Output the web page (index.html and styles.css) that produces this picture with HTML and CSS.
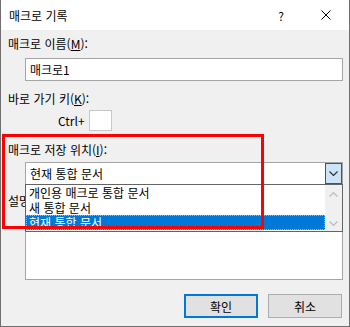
FILE: index.html
```html
<!DOCTYPE html>
<html lang="ko">
<head>
<meta charset="UTF-8" />
<title>매크로 기록</title>
<link rel="stylesheet" href="styles.css">
</head>
<body>

<div class="window">
  <!-- Заголовок окна -->
  <div class="titlebar">
    <span class="title">매크로 기록</span>
    <span class="help">?</span>
    <svg class="close" width="10" height="10" viewBox="0 0 10 10">
      <path d="M0.5 0.5 L9.5 9.5 M9.5 0.5 L0.5 9.5" stroke="#000" stroke-width="1" fill="none" />
    </svg>
  </div>

  <div class="content">
    <div class="label">매크로 이름(<u>M</u>):</div>
    <div class="field name-field">매크로1</div>

    <div class="label label-shortcut">바로 가기 키(<u>K</u>):</div>
    <div class="shortcut">
      <span>Ctrl+</span>
      <span class="key-box"></span>
    </div>

    <div class="label label-store">매크로 저장 위치(<u>I</u>):</div>
    <div class="combo">
      <span class="combo-text">현재 통합 문서</span>
      <span class="combo-btn">
        <svg width="9" height="5" viewBox="0 0 9 5"><path d="M0.5 0.5 L4.5 4.5 L8.5 0.5" stroke="#333" stroke-width="1.2" fill="none" /></svg>
      </span>

      <!-- Раскрытый список -->
      <div class="dropdown">
        <ul class="options">
          <li>개인용 매크로 통합 문서</li>
          <li>새 통합 문서</li>
          <li class="selected">현재 통합 문서</li>
        </ul>
        <div class="scrollbar">
          <svg width="9" height="5" viewBox="0 0 9 5"><path d="M0.5 4.5 L4.5 0.7 L8.5 4.5" stroke="#c2c2c2" stroke-width="1.5" fill="none" /></svg>
          <svg width="9" height="5" viewBox="0 0 9 5"><path d="M0.5 0.5 L4.5 4.3 L8.5 0.5" stroke="#c2c2c2" stroke-width="1.5" fill="none" /></svg>
        </div>
      </div>
    </div>

    <div class="label label-desc">설명(<u>D</u>):</div>
    <div class="field desc-field"></div>

    <div class="buttons">
      <button class="btn btn-default">확인</button>
      <button class="btn">취소</button>
    </div>
  </div>

  <!-- Красная рамка выделения -->
  <div class="highlight"></div>
</div>

</body>
</html>
```

FILE: styles.css
```css
/* Общие стили */
body {
  margin: 0;
  font-family: "Noto Sans CJK KR", "Noto Sans", sans-serif;
  font-size: 12px;
  line-height: 15px;
  color: #000;
  background: #fff;
}

u {
  text-decoration: underline;
  text-underline-offset: 1px;
}

/* Окно */
.window {
  position: relative;
  width: 350px;
  height: 327px;
  box-sizing: border-box;
  border: 1px solid #6f6f6f;
  border-top: none;
  background: #f0f0f0;
  overflow: hidden;
}

/* Заголовок */
.titlebar {
  height: 30px;
  display: flex;
  align-items: center;
  padding-left: 8px;
  background: #fff;
}
.titlebar .title {
  flex: 1;
}
.titlebar .help {
  margin-right: 37px;
}
.titlebar .close {
  margin-right: 18px;
}

/* Основной контент */
.content {
  padding: 6px 6px 0 7px;
}

.label-shortcut {
  margin-top: 10px;
}
.label-store {
  margin-top: 11px;
}
.label-desc {
  margin-top: 8px;
}

/* Поля */
.field {
  margin-left: 17px;
  width: 318px;
  box-sizing: border-box;
  background: #fff;
  border: 1px solid #a5a5a5;
}
.name-field {
  margin-top: 7px;
  height: 23px;
  padding: 3px 4px;
}
.desc-field {
  margin-top: 6px;
  height: 66px;
}

.shortcut {
  margin-top: 4px;
  padding-left: 50px;
  display: flex;
  align-items: center;
  gap: 4px;
}
.key-box {
  width: 23px;
  height: 21px;
  box-sizing: border-box;
  background: #fff;
  border: 1px solid #c8c8c8;
}

/* Комбобокс */
.combo {
  position: relative;
  margin-top: 5px;
  margin-left: 17px;
  width: 318px;
  height: 23px;
  box-sizing: border-box;
  border: 1px solid #a5a5a5;
  background: #fff;
  display: flex;
  align-items: center;
}
.combo-text {
  flex: 1;
  padding-left: 4px;
}
.combo-btn {
  width: 17px;
  height: 21px;
  box-sizing: border-box;
  border: 1px solid #1f5f99;
  background: #cce4f7;
  display: flex;
  align-items: center;
  justify-content: center;
}

/* Выпадающий список */
.dropdown {
  position: absolute;
  left: -1px;
  top: 21px;
  width: 318px;
  height: 48px;
  box-sizing: border-box;
  border: 1px solid #646464;
  background: #fff;
  display: flex;
  z-index: 2;
}
.options {
  flex: 1;
  list-style: none;
  margin: 0;
  padding: 0;
}
.options li {
  height: 15px;
  padding-left: 3px;
  line-height: 15px;
}
.options li.selected {
  background: #0078d7;
  color: #fff;
  outline: 1px dotted #f3a34b;
  outline-offset: -1px;
}
.scrollbar {
  width: 17px;
  background: #f0f0f0;
  display: flex;
  flex-direction: column;
  align-items: center;
  justify-content: space-between;
  padding: 7px 0 5px;
  box-sizing: border-box;
}

/* Кнопки */
.buttons {
  margin-top: 14px;
  margin-right: 1px;
  display: flex;
  justify-content: flex-end;
  gap: 10px;
}
.btn {
  width: 74px;
  height: 24px;
  font-family: inherit;
  font-size: 12px;
  color: #000;
  background: #e1e1e1;
  border: 1px solid #adadad;
  padding: 0;
}
.btn-default {
  border: 2px solid #0078d7;
}

/* Красная рамка */
.highlight {
  position: absolute;
  left: 1px;
  top: 134px;
  width: 262px;
  height: 95px;
  box-sizing: border-box;
  border: 3px solid #ff0000;
  z-index: 3;
}
```
